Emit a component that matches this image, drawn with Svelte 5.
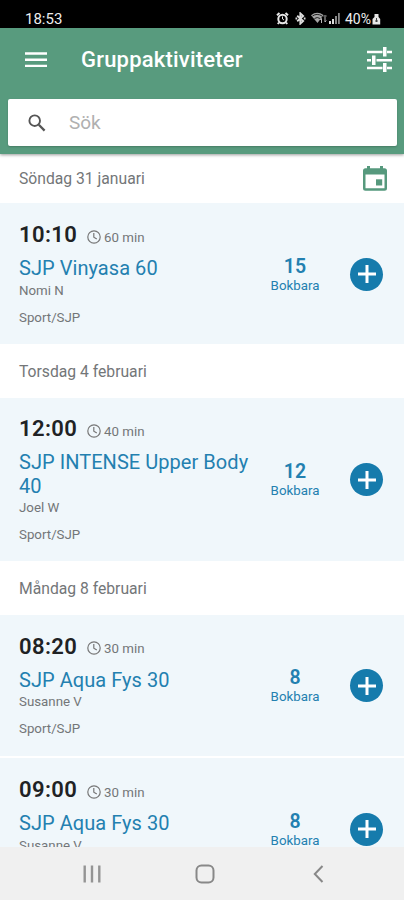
<script lang="ts">
  type Activity = { time: string; minutes: number; name: string; leader: string; place: string; slots: number };
  type Day = { label: string; activities: Activity[] };

  const days: Day[] = [
    {
      label: 'Söndag 31 januari',
      activities: [
        { time: '10:10', minutes: 60, name: 'SJP Vinyasa 60', leader: 'Nomi N', place: 'Sport/SJP', slots: 15 },
      ],
    },
    {
      label: 'Torsdag 4 februari',
      activities: [
        { time: '12:00', minutes: 40, name: 'SJP INTENSE Upper Body 40', leader: 'Joel W', place: 'Sport/SJP', slots: 12 },
      ],
    },
    {
      label: 'Måndag 8 februari',
      activities: [
        { time: '08:20', minutes: 30, name: 'SJP Aqua Fys 30', leader: 'Susanne V', place: 'Sport/SJP', slots: 8 },
        { time: '09:00', minutes: 30, name: 'SJP Aqua Fys 30', leader: 'Susanne V', place: 'Sport/SJP', slots: 8 },
      ],
    },
  ];

  let query = $state('');
</script>

<div class="screen">
  <div class="status">
    <span class="clock">18:53</span>
    <svg class="alarm" width="13" height="13" viewBox="0 0 13 13" fill="none" stroke="#e8e8e8">
      <circle cx="6.5" cy="7" r="4.2" stroke-width="2" />
      <path d="M1 3.2 3.5 1M12 3.2 9.5 1M3 10.5 1.8 12M10 10.5l1.2 1.5" stroke-width="2" />
      <path d="M6.5 4.5V7l1.5 1" />
    </svg>
    <svg width="11" height="13" viewBox="0 0 11 13" fill="none" stroke="#dedede" stroke-width="1.8">
      <path d="m2.2 3.8 6 5.2-2.9 2.7V1.3L8.2 4l-6 5.2" />
      <path d="M.5 6.5h1.7M8.8 6.5h1.7" />
    </svg>
    <svg class="wifi" width="16" height="13" viewBox="0 0 16 13">
      <path d="M0 3.2Q6-1.5 12.5 3L6.5 11z" fill="#a5a5a5" />
      <path d="M1.5 4Q6 .8 11 4M3.5 6.5q2.8-2 5.5 0" fill="none" stroke="#222" />
      <path d="M10.5 11V6.5L9.2 8M14 5v5l1.3-1.5M12.5 4h3" fill="none" stroke="#bbb" />
    </svg>
    <svg class="signal" width="11" height="11" viewBox="0 0 11 11">
      <path d="M0 8h2v3H0zM3 6h2v5H3z" fill="#ddd" />
      <path d="M6 3h2v8H6zM9 0h1.8v11H9z" fill="#888" />
    </svg>
    <span class="percent">40%</span>
    <svg width="9" height="12" viewBox="0 0 9 12">
      <path d="M2.5 1h4v3l1.7 2v5.5H.5V6l2-2z" fill="#e8e8e8" />
      <path d="M4.5 5v4M3 8h3" stroke="#444" />
    </svg>
  </div>

  <header>
    <div class="toolbar">
      <button aria-label="Meny">
        <svg width="22" height="16" viewBox="0 0 22 16" fill="#fff">
          <path d="M0 .3h22v2.4H0zM0 6.5h22v2.4H0zM0 12.7h22v2.4H0z" />
        </svg>
      </button>
      <h1>Gruppaktiviteter</h1>
      <button aria-label="Filter">
        <svg width="25" height="25" viewBox="0 0 25 25" fill="#fff">
          <path d="M0 3.8h15.5v2.4H0zM20 3.8h5v2.4h-5zM16 0h3.5v9.5H16zM0 12h4v2.4H0zM9.5 12H25v2.4H9.5zM5 8.5h3.5V18H5zM0 19.8h15.5v2.4H0zM20 19.8h5v2.4h-5zM16 16h3.5v9H16z" />
        </svg>
      </button>
    </div>
    <label class="search">
      <svg width="18" height="18" viewBox="0 0 18 18" fill="none" stroke="#555">
        <circle cx="6.7" cy="6.7" r="5.3" stroke-width="1.9" />
        <path d="m10.8 10.8 5.8 5.8" stroke-width="2.3" />
      </svg>
      <input type="text" placeholder="Sök" bind:value={query} />
    </label>
  </header>

  <main>
    {#each days as day, i}
      <section>
        <div class="day" class:first={i === 0}>
          <h2>{day.label}</h2>
          {#if i === 0}
            <svg width="24" height="25" viewBox="0 0 24 25" fill="#56997d">
              <path fill-rule="evenodd" d="M4 0h3v2.3h10V0h3v2.3h1.5A2.5 2.5 0 0 1 24 4.8v17.4a2.5 2.5 0 0 1-2.5 2.5h-19A2.5 2.5 0 0 1 0 22.2V4.8a2.5 2.5 0 0 1 2.5-2.5H4zM2.5 8.5v13.7h19V8.5z" />
              <path d="M13 13.3h6.2v6.2H13z" />
            </svg>
          {/if}
        </div>
        {#each day.activities as activity}
          <article>
            <div class="info">
              <div class="when">
                <strong>{activity.time}</strong>
                <svg width="14" height="14" viewBox="0 0 14 14" fill="none" stroke="#777" stroke-width="1.2">
                  <circle cx="7" cy="7" r="6.2" />
                  <path d="M6.8 3v4.2l3 1.9" />
                </svg>
                <span>{activity.minutes} min</span>
              </div>
              <h3>{activity.name}</h3>
              <p>{activity.leader}</p>
              <p class="place">{activity.place}</p>
            </div>
            <div class="slots">
              <b>{activity.slots}</b>
              <span>Bokbara</span>
            </div>
            <button class="add" aria-label="Boka">
              <svg width="18" height="18" viewBox="0 0 18 18" stroke="#fff" stroke-width="3">
                <path d="M9 0v18M0 9h18" />
              </svg>
            </button>
          </article>
        {/each}
      </section>
    {/each}
  </main>

  <nav>
    <svg width="18" height="18" viewBox="0 0 18 18" stroke="#949494" stroke-width="2.4">
      <path d="M1.7.5v17M9 .5v17M16.3.5v17" />
    </svg>
    <svg class="home" width="20" height="20" viewBox="0 0 20 20" fill="none" stroke="#888" stroke-width="2">
      <rect x="1.5" y="1.5" width="17" height="17" rx="5" />
    </svg>
    <svg width="11" height="18" viewBox="0 0 11 18" fill="none" stroke="#888" stroke-width="2">
      <path d="M9.5 1 1.8 9l7.7 8" />
    </svg>
  </nav>
</div>

<style>
  :global(body) {
    background: #fff;
  }

  .screen {
    display: flex;
    flex-direction: column;
    height: 900px;
    overflow: hidden;
    font-family: Roboto, sans-serif;
    color: #737678;
  }

  h1,
  h2,
  h3,
  p {
    margin: 0;
    font-weight: 400;
  }

  button {
    display: flex;
    padding: 0;
    border: 0;
    background: none;
  }

  svg {
    display: block;
    flex-shrink: 0;
  }

  .status {
    display: flex;
    flex-shrink: 0;
    align-items: center;
    box-sizing: border-box;
    height: 28px;
    padding: 9px 23px 0 25px;
    background: #000;
    color: #eee;
    font-size: 14px;
  }

  .clock {
    margin-right: auto;
    font-size: 15px;
  }

  .alarm {
    margin-right: 6px;
  }

  .wifi {
    margin-left: 5px;
  }

  .signal {
    margin-left: 2px;
  }

  .percent {
    margin: 0 1px 0 5px;
  }

  header {
    position: relative;
    flex-shrink: 0;
    box-sizing: border-box;
    height: 126px;
    padding: 0 7px 0 8px;
    background: #589b7e;
    box-shadow: 0 1px 3px rgb(0 0 0 / 0.4);
  }

  .toolbar {
    display: flex;
    align-items: center;
    height: 63px;
    margin-bottom: 8px;
    padding: 0 5px 0 17px;
  }

  h1 {
    flex: 1;
    margin-left: 34px;
    color: #fff;
    font-size: 22px;
    font-weight: 500;
    letter-spacing: 0.2px;
  }

  .search {
    display: flex;
    align-items: center;
    height: 47px;
    padding-left: 20px;
    border-radius: 2px;
    background: #fff;
    box-shadow: 0 1px 2px rgb(0 0 0 / 0.2);
  }

  input {
    width: 250px;
    margin-left: 23px;
    padding: 0;
    border: 0;
    outline: 0;
    background: none;
    font: 19px Roboto, sans-serif;
  }

  input::placeholder {
    color: #b0b0b0;
  }

  main {
    flex: 1;
    min-height: 0;
    overflow: hidden;
  }

  .day {
    display: flex;
    align-items: center;
    justify-content: space-between;
    box-sizing: border-box;
    height: 53.2px;
    padding: 2px 17px 0 19px;
  }

  .day.first {
    height: 49px;
    padding-top: 0;
  }

  h2 {
    font-size: 15.7px;
  }

  article {
    display: flex;
    align-items: center;
    box-sizing: border-box;
    min-height: 141.4px;
    padding: 17.8px 21px 17px 19px;
    background: #f0f7fb;
  }

  article + article {
    margin-top: 2px;
  }

  .info {
    width: 240px;
  }

  .when {
    display: flex;
    align-items: center;
    height: 27px;
    font-size: 13.3px;
  }

  .when strong {
    width: 68px;
    color: #202224;
    font-size: 22px;
    font-weight: 600;
    letter-spacing: 0.4px;
  }

  .when svg {
    margin: 4px 3px 0 0;
  }

  .when span {
    margin-top: 5px;
  }

  h3 {
    margin-top: 9px;
    color: #2380b0;
    font-size: 20px;
    letter-spacing: 0.05px;
    line-height: 23.5px;
  }

  p {
    font-size: 13.3px;
    line-height: 19px;
  }

  .place {
    margin-top: 8px;
  }

  .slots {
    display: flex;
    flex-direction: column;
    align-items: center;
    width: 72px;
    color: #2380b0;
    font-size: 13.3px;
    line-height: 18px;
  }

  .slots b {
    margin-top: 2px;
    font-size: 19.5px;
    font-weight: 600;
    line-height: 21px;
  }

  .add {
    align-items: center;
    justify-content: center;
    width: 33px;
    height: 33px;
    margin-left: auto;
    border-radius: 50%;
    background: #167bac;
  }

  nav {
    display: flex;
    flex-shrink: 0;
    align-items: center;
    justify-content: space-between;
    box-sizing: border-box;
    height: 53px;
    padding: 0 80px 0 83px;
    background: #f0f0f0;
  }

  .home {
    margin-right: 4px;
  }
</style>
